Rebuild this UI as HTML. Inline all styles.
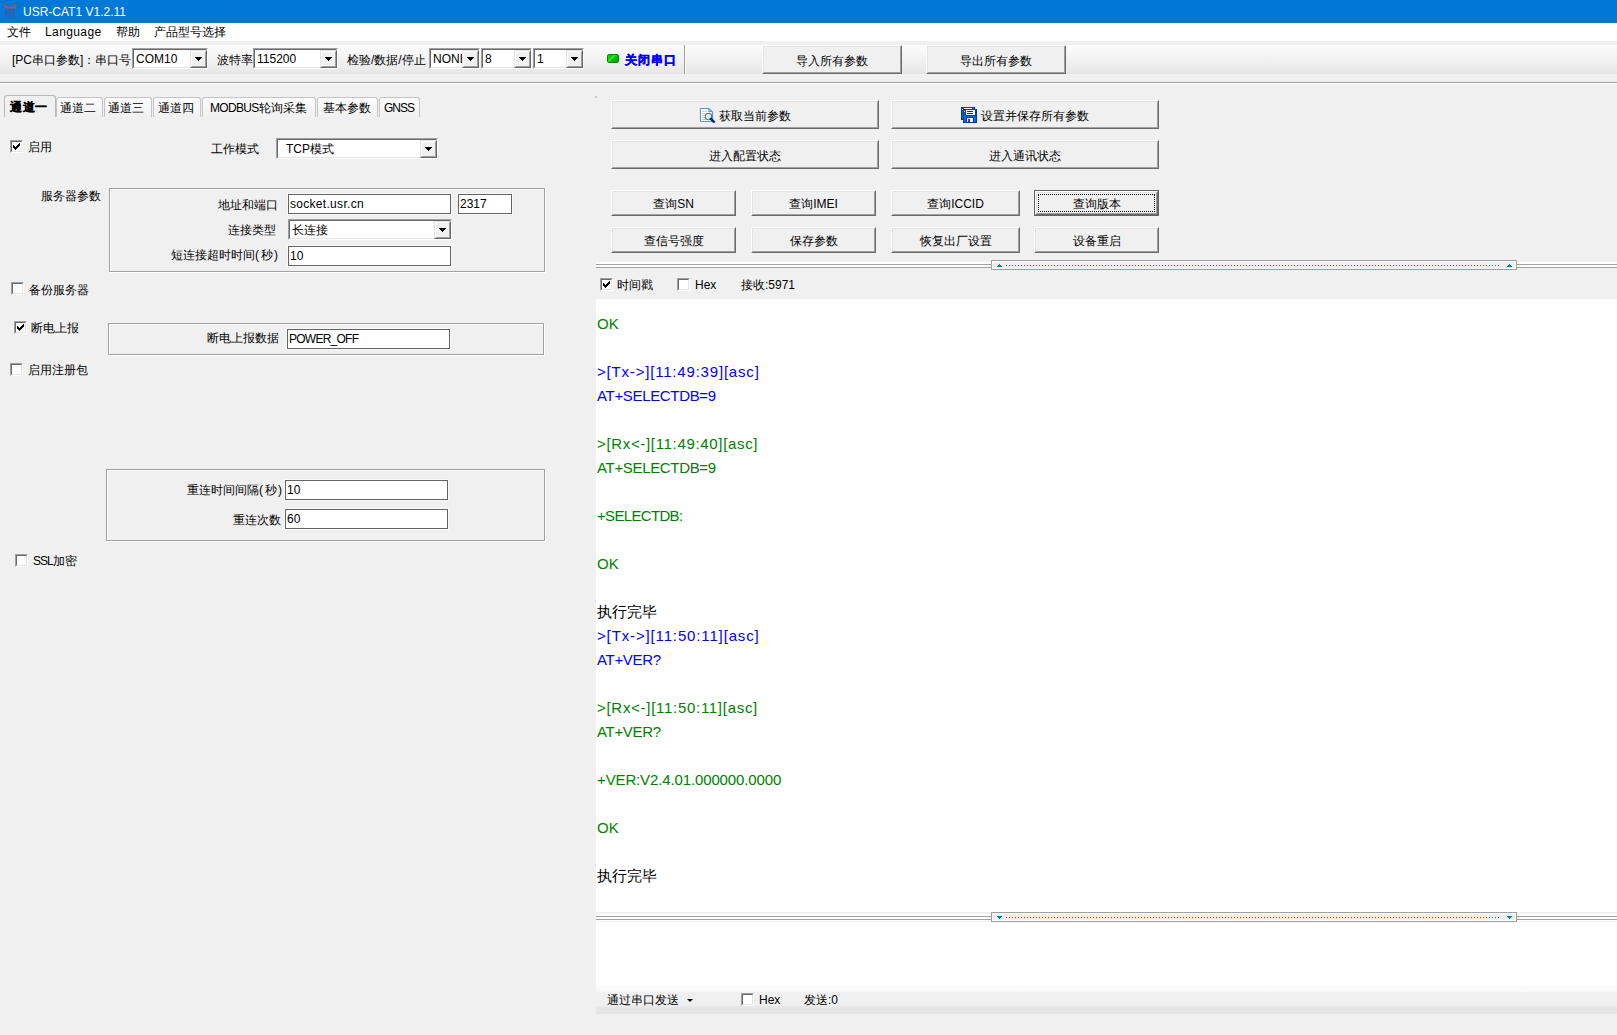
<!DOCTYPE html>
<html><head><meta charset="utf-8">
<style>
html,body{margin:0;padding:0;}
body{width:1617px;height:1035px;overflow:hidden;position:relative;background:#f0f0f0;font-family:"Liberation Sans",sans-serif;font-size:12px;color:#000;}
div{box-sizing:border-box;}
.a{position:absolute;}
.t{position:absolute;white-space:nowrap;line-height:14px;font-size:12px;}
/* raised 3D button */
.btn{position:absolute;background:#f0f0f0;border-top:1px solid #fff;border-left:1px solid #fff;border-right:1px solid #696969;border-bottom:1px solid #696969;}
.btn::before{content:"";position:absolute;left:0;top:0;right:0;bottom:0;border-top:1px solid #e3e3e3;border-left:1px solid #e3e3e3;border-right:1px solid #a0a0a0;border-bottom:1px solid #a0a0a0;}
.btn span{position:absolute;left:0;right:0;top:50%;margin-top:-6px;text-align:center;line-height:14px;white-space:nowrap;}
/* simple edit */
.ed{position:absolute;background:#fff;border:1px solid #646464;box-shadow:0 0 0 1px #f9f9f9;}
.ed span{position:absolute;left:1px;top:2px;line-height:14px;white-space:nowrap;}
/* sunken combo */
.cb{position:absolute;background:#fff;border-top:1px solid #a0a0a0;border-left:1px solid #a0a0a0;border-right:1px solid #fff;border-bottom:1px solid #fff;}
.cb::before{content:"";position:absolute;left:0;top:0;right:0;bottom:0;border-top:1px solid #696969;border-left:1px solid #696969;border-right:1px solid #e3e3e3;border-bottom:1px solid #e3e3e3;}
.cb .dd{position:absolute;top:1px;right:0;bottom:0;width:17px;background:#f0f0f0;border-top:1px solid #e3e3e3;border-left:1px solid #e3e3e3;border-right:1px solid #696969;border-bottom:1px solid #696969;}
.cb .dd::before{content:"";position:absolute;left:0;top:0;right:0;bottom:0;border-top:1px solid #fff;border-left:1px solid #fff;border-right:1px solid #a0a0a0;border-bottom:1px solid #a0a0a0;}
.cb .dd::after{content:"";position:absolute;left:4px;top:6px;width:7px;height:4px;background:linear-gradient(#000,#000) 0 0/7px 1px no-repeat,linear-gradient(#000,#000) 1px 1px/5px 1px no-repeat,linear-gradient(#000,#000) 2px 2px/3px 1px no-repeat,linear-gradient(#000,#000) 3px 3px/1px 1px no-repeat;}
.cb span{position:absolute;left:3px;top:3px;line-height:14px;white-space:nowrap;}
/* checkbox */
.ck{position:absolute;width:13px;height:13px;background:#fff;border-top:1px solid #a0a0a0;border-left:1px solid #a0a0a0;border-right:1px solid #fff;border-bottom:1px solid #fff;}
.ck::before{content:"";position:absolute;left:0;top:0;right:0;bottom:0;border-top:1px solid #696969;border-left:1px solid #696969;border-right:1px solid #e3e3e3;border-bottom:1px solid #e3e3e3;}
.ck svg{position:absolute;left:0;top:0;}
/* group box */
.gb{position:absolute;border:1px solid #a0a0a0;box-shadow:inset 1px 1px 0 #fff, 1px 1px 0 #fff;}
.log{position:absolute;font-size:15px;line-height:24px;white-space:pre;}
.g{color:#008000}.b{color:#0000ff}
</style></head><body>

<!-- title bar -->
<div class="a" style="left:0;top:0;width:1617px;height:23px;background:#0078d7;"></div>
<svg class="a" style="left:0;top:0" width="20" height="20">
<path d="M4 4 L4.6 8.6 L15.4 8.6 L16 4 L14.6 4 L14.2 6.8 L5.8 6.8 L5.4 4 Z" fill="#d4453b"/>
<rect x="5" y="8.8" width="9.5" height="8.4" fill="#3a5aa6" opacity="0.8"/>
<rect x="7.3" y="10" width="1.2" height="7.4" fill="#0078d7"/>
<rect x="10.8" y="10" width="1.2" height="7.4" fill="#0078d7"/>
</svg>
<div class="t" style="left:23px;top:5px;color:#fff;">USR-CAT1 V1.2.11</div>

<!-- menu bar -->
<div class="a" style="left:0;top:23px;width:1617px;height:18px;background:#fff;"></div>
<div class="t" style="left:7px;top:25px;">文件</div>
<div class="t" style="left:45px;top:25px;letter-spacing:0.4px;">Language</div>
<div class="t" style="left:116px;top:25px;">帮助</div>
<div class="t" style="left:154px;top:25px;">产品型号选择</div>

<!-- toolbar -->
<div class="a" style="left:0;top:45px;width:1617px;height:29px;background:linear-gradient(#fcfcfc,#f3f3f3 45%,#e9e9e9 90%,#e3e3e3);"></div>
<div class="a" style="left:0;top:82px;width:1617px;height:1px;background:#a0a0a0;"></div>
<div class="a" style="left:0;top:83px;width:1617px;height:1px;background:#fff;"></div>

<!-- log area -->
<div class="a" style="left:596px;top:299px;width:1021px;height:613px;background:#fff;"></div>
<!-- send area -->
<div class="a" style="left:596px;top:922px;width:1021px;height:63px;background:#fff;"></div>
<!-- bottom bar -->
<div class="a" style="left:596px;top:985px;width:1021px;height:29px;background:linear-gradient(#fcfcfc 0,#f8f8f8 7px,#f0f0f0 7px,#efefef 21px,#e8e8e8 21px,#e4e4e4 29px);"></div>


<!-- toolbar contents -->
<div class="t" style="left:12px;top:53px;">[PC串口参数]：串口号</div>
<div class="cb" style="left:132px;top:48px;width:76px;height:21px;"><span>COM10</span><div class="dd"></div></div>
<div class="t" style="left:217px;top:53px;">波特率</div>
<div class="cb" style="left:253px;top:48px;width:85px;height:21px;"><span>115200</span><div class="dd"></div></div>
<div class="t" style="left:347px;top:53px;">检验/数据/停止</div>
<div class="cb" style="left:429px;top:48px;width:51px;height:21px;"><span>NONE</span><div class="dd"></div></div>
<div class="cb" style="left:481px;top:48px;width:51px;height:21px;"><span>8</span><div class="dd"></div></div>
<div class="cb" style="left:533px;top:48px;width:51px;height:21px;"><span>1</span><div class="dd"></div></div>
<div class="a" style="left:607px;top:54px;width:12px;height:9px;border-radius:2px;background:linear-gradient(135deg,#00d800 0,#00d800 30%,#40f040 40%,#00c800 50%,#00b000 70%,#00a000 100%);border:1px solid #008a00;"></div>
<div class="t" style="left:625px;top:53px;color:#0000ff;font-weight:bold;letter-spacing:1px;-webkit-text-stroke:0.4px #0000ff;">关闭串口</div>
<div class="a" style="left:684px;top:45px;width:1px;height:29px;background:#a0a0a0;"></div>
<div class="a" style="left:685px;top:45px;width:1px;height:29px;background:#fff;"></div>
<div class="btn" style="left:762px;top:45px;width:140px;height:29px;"><span>导入所有参数</span></div>
<div class="btn" style="left:926px;top:45px;width:140px;height:29px;"><span>导出所有参数</span></div>

<!-- tabs -->
<div class="a" style="left:56px;top:97px;width:47px;height:20px;border:1px solid #c4c4c4;border-bottom:none;border-radius:3px 3px 0 0;background:linear-gradient(#fdfdfd,#f0f0f0);"></div>
<div class="a" style="left:104px;top:97px;width:48px;height:20px;border:1px solid #c4c4c4;border-bottom:none;border-radius:3px 3px 0 0;background:linear-gradient(#fdfdfd,#f0f0f0);"></div>
<div class="a" style="left:153px;top:97px;width:48px;height:20px;border:1px solid #c4c4c4;border-bottom:none;border-radius:3px 3px 0 0;background:linear-gradient(#fdfdfd,#f0f0f0);"></div>
<div class="a" style="left:202px;top:97px;width:114px;height:20px;border:1px solid #c4c4c4;border-bottom:none;border-radius:3px 3px 0 0;background:linear-gradient(#fdfdfd,#f0f0f0);"></div>
<div class="a" style="left:317px;top:97px;width:61px;height:20px;border:1px solid #c4c4c4;border-bottom:none;border-radius:3px 3px 0 0;background:linear-gradient(#fdfdfd,#f0f0f0);"></div>
<div class="a" style="left:379px;top:97px;width:41px;height:20px;border:1px solid #c4c4c4;border-bottom:none;border-radius:3px 3px 0 0;background:linear-gradient(#fdfdfd,#f0f0f0);"></div>
<div class="a" style="left:4px;top:95px;width:52px;height:22px;border:1px solid #b8b8b8;border-bottom:none;border-radius:3px 3px 0 0;background:#f0f0f0;"></div>
<div class="t" style="left:10px;top:100px;font-weight:bold;-webkit-text-stroke:0.3px #000;letter-spacing:0.5px;">通道一</div>
<div class="t" style="left:60px;top:101px;">通道二</div>
<div class="t" style="left:108px;top:101px;">通道三</div>
<div class="t" style="left:158px;top:101px;">通道四</div>
<div class="t" style="left:210px;top:101px;"><span style="letter-spacing:-0.67px">MODBUS</span>轮询采集</div>
<div class="t" style="left:323px;top:101px;">基本参数</div>
<div class="t" style="left:384px;top:101px;letter-spacing:-1px;">GNSS</div>

<!-- left panel -->
<div class="ck" style="left:10px;top:140px;"><svg width="11" height="11" shape-rendering="crispEdges" fill="#000"><rect x="8" y="2" width="1" height="1"/><rect x="7" y="3" width="1" height="1"/><rect x="8" y="3" width="1" height="1"/><rect x="2" y="4" width="1" height="1"/><rect x="6" y="4" width="1" height="1"/><rect x="7" y="4" width="1" height="1"/><rect x="8" y="4" width="1" height="1"/><rect x="2" y="5" width="1" height="1"/><rect x="3" y="5" width="1" height="1"/><rect x="5" y="5" width="1" height="1"/><rect x="6" y="5" width="1" height="1"/><rect x="7" y="5" width="1" height="1"/><rect x="2" y="6" width="1" height="1"/><rect x="3" y="6" width="1" height="1"/><rect x="4" y="6" width="1" height="1"/><rect x="5" y="6" width="1" height="1"/><rect x="6" y="6" width="1" height="1"/><rect x="3" y="7" width="1" height="1"/><rect x="4" y="7" width="1" height="1"/><rect x="5" y="7" width="1" height="1"/><rect x="4" y="8" width="1" height="1"/></svg></div>
<div class="t" style="left:28px;top:140px;">启用</div>
<div class="t" style="left:211px;top:142px;">工作模式</div>
<div class="cb" style="left:276px;top:138px;width:162px;height:21px;"><span style="left:9px">TCP模式</span><div class="dd"></div></div>

<div class="t" style="left:41px;top:189px;">服务器参数</div>
<div class="gb" style="left:109px;top:188px;width:436px;height:84px;"></div>
<div class="t" style="left:218px;top:198px;">地址和端口</div>
<div class="ed" style="left:288px;top:194px;width:163px;height:20px;"><span style="letter-spacing:0.3px">socket.usr.cn</span></div>
<div class="ed" style="left:458px;top:194px;width:54px;height:20px;"><span>2317</span></div>
<div class="t" style="left:228px;top:223px;">连接类型</div>
<div class="cb" style="left:288px;top:219px;width:164px;height:21px;"><span>长连接</span><div class="dd"></div></div>
<div class="t" style="left:171px;top:248px;">短连接超时时间<span style="letter-spacing:2px">(</span><span style="letter-spacing:1px">秒</span>)</div>
<div class="ed" style="left:288px;top:246px;width:163px;height:20px;"><span>10</span></div>

<div class="ck" style="left:11px;top:282px;"></div>
<div class="t" style="left:29px;top:283px;">备份服务器</div>

<div class="ck" style="left:14px;top:321px;"><svg width="11" height="11" shape-rendering="crispEdges" fill="#000"><rect x="8" y="2" width="1" height="1"/><rect x="7" y="3" width="1" height="1"/><rect x="8" y="3" width="1" height="1"/><rect x="2" y="4" width="1" height="1"/><rect x="6" y="4" width="1" height="1"/><rect x="7" y="4" width="1" height="1"/><rect x="8" y="4" width="1" height="1"/><rect x="2" y="5" width="1" height="1"/><rect x="3" y="5" width="1" height="1"/><rect x="5" y="5" width="1" height="1"/><rect x="6" y="5" width="1" height="1"/><rect x="7" y="5" width="1" height="1"/><rect x="2" y="6" width="1" height="1"/><rect x="3" y="6" width="1" height="1"/><rect x="4" y="6" width="1" height="1"/><rect x="5" y="6" width="1" height="1"/><rect x="6" y="6" width="1" height="1"/><rect x="3" y="7" width="1" height="1"/><rect x="4" y="7" width="1" height="1"/><rect x="5" y="7" width="1" height="1"/><rect x="4" y="8" width="1" height="1"/></svg></div>
<div class="t" style="left:31px;top:321px;">断电上报</div>
<div class="gb" style="left:108px;top:323px;width:436px;height:32px;"></div>
<div class="t" style="left:207px;top:331px;">断电上报数据</div>
<div class="ed" style="left:287px;top:329px;width:163px;height:20px;"><span style="letter-spacing:-0.75px">POWER_OFF</span></div>

<div class="ck" style="left:10px;top:363px;"></div>
<div class="t" style="left:28px;top:363px;">启用注册包</div>

<div class="gb" style="left:106px;top:469px;width:439px;height:72px;"></div>
<div class="t" style="left:187px;top:483px;">重连时间间隔<span style="letter-spacing:2px">(</span><span style="letter-spacing:1px">秒</span>)</div>
<div class="ed" style="left:285px;top:480px;width:163px;height:20px;"><span>10</span></div>
<div class="t" style="left:233px;top:513px;">重连次数</div>
<div class="ed" style="left:285px;top:509px;width:163px;height:20px;"><span>60</span></div>

<div class="ck" style="left:15px;top:554px;"></div>
<div class="t" style="left:33px;top:554px;"><span style="letter-spacing:-1px">SSL</span>加密</div>


<!-- right panel buttons -->
<div class="a" style="left:595px;top:96px;width:2px;height:2px;background:#c8c8c8;"></div>
<div class="btn" style="left:611px;top:100px;width:268px;height:29px;"><span style="padding-left:20px">获取当前参数</span></div>
<svg class="a" style="left:699px;top:107px" width="17" height="17" viewBox="0 0 17 17">
<path d="M1.5 1.5 H10 L13.5 5 V14.5 H1.5 Z" fill="#fff" stroke="#5b9bd5" stroke-width="1.2"/>
<path d="M10 1.5 V4.5 H13" fill="none" stroke="#5b9bd5" stroke-width="1.2"/>
<path d="M3 4.5 H8 M3 6.5 H7 M3 8.5 H6 M3 10.5 H6 M3 12.5 H7" stroke="#d0d0d0" stroke-width="1"/>
<circle cx="9.5" cy="9.5" r="3.2" fill="#c9f7f7" stroke="#6e6e6e" stroke-width="1.1"/>
<path d="M11.8 11.8 L15 14.8" stroke="#0020a0" stroke-width="2.4" stroke-linecap="round"/>
</svg>
<div class="btn" style="left:891px;top:100px;width:268px;height:29px;"><span style="padding-left:20px">设置并保存所有参数</span></div>
<svg class="a" style="left:960px;top:106px" width="18" height="18" shape-rendering="crispEdges">
<rect x="1" y="1" width="14" height="13" fill="#003a9e"/>
<rect x="2" y="2" width="12" height="11" fill="#0a64d2"/>
<rect x="4" y="2" width="8" height="1" fill="#fff"/>
<rect x="2" y="3" width="1" height="1" fill="#fff"/>
<rect x="3" y="3" width="14" height="14" fill="#003a9e"/>
<rect x="4" y="4" width="12" height="12" fill="#0a6ad6"/>
<rect x="5" y="4" width="11" height="6" fill="#003a9e"/>
<rect x="6" y="4" width="9" height="5" fill="#fff"/>
<rect x="7" y="5" width="6" height="1" fill="#0033a0"/>
<rect x="7" y="7" width="6" height="1" fill="#0033a0"/>
<rect x="4" y="5" width="1" height="1" fill="#fff"/>
<rect x="6" y="11" width="8" height="5" fill="#003a9e"/>
<rect x="7" y="12" width="6" height="4" fill="#f4f4f4"/>
<rect x="8" y="13" width="2" height="3" fill="#0a50c0"/>
</svg>
<div class="btn" style="left:611px;top:140px;width:268px;height:29px;"><span>进入配置状态</span></div>
<div class="btn" style="left:891px;top:140px;width:268px;height:29px;"><span>进入通讯状态</span></div>

<div class="btn" style="left:611px;top:190px;width:125px;height:26px;"><span>查询SN</span></div>
<div class="btn" style="left:751px;top:190px;width:125px;height:26px;"><span>查询IMEI</span></div>
<div class="btn" style="left:891px;top:190px;width:129px;height:26px;"><span>查询ICCID</span></div>
<div class="a" style="left:1034px;top:190px;width:125px;height:26px;border:1px solid #646464;"></div>
<div class="btn" style="left:1035px;top:191px;width:123px;height:24px;"><span>查询版本</span></div>
<div class="a" style="left:1038px;top:194px;width:117px;height:18px;border:1px dotted #000;"></div>

<div class="btn" style="left:611px;top:227px;width:125px;height:26px;"><span>查信号强度</span></div>
<div class="btn" style="left:751px;top:227px;width:125px;height:26px;"><span>保存参数</span></div>
<div class="btn" style="left:891px;top:227px;width:129px;height:26px;"><span>恢复出厂设置</span></div>
<div class="btn" style="left:1034px;top:227px;width:125px;height:26px;"><span>设备重启</span></div>

<!-- top splitter -->
<div class="a" style="left:596px;top:262px;width:1021px;height:6px;background:linear-gradient(#fff 0,#fff 2px,#a0a0a0 2px,#a0a0a0 3px,#fff 3px,#fff 5px,#a0a0a0 5px,#a0a0a0 6px);"></div>
<div class="a" style="left:991px;top:260px;width:526px;height:10px;background:#f0f0f0;border:1px solid #a0a0a0;box-shadow:inset 0 0 0 1px #fff;"></div>
<div class="a" style="left:1006px;top:265px;width:493px;height:1px;background:repeating-linear-gradient(90deg,#0078d7 0,#0078d7 1px,transparent 1px,transparent 3px);"></div>
<svg class="a" style="left:997px;top:264px" width="5" height="3" shape-rendering="crispEdges"><rect x="2" y="0" width="1" height="1" fill="#0078d7"/><rect x="1" y="1" width="3" height="1" fill="#0078d7"/><rect x="0" y="2" width="5" height="1" fill="#0078d7"/></svg>
<svg class="a" style="left:1507px;top:264px" width="5" height="3" shape-rendering="crispEdges"><rect x="2" y="0" width="1" height="1" fill="#0078d7"/><rect x="1" y="1" width="3" height="1" fill="#0078d7"/><rect x="0" y="2" width="5" height="1" fill="#0078d7"/></svg>

<!-- receive options -->
<div class="ck" style="left:600px;top:278px;"><svg width="11" height="11" shape-rendering="crispEdges" fill="#000"><rect x="8" y="2" width="1" height="1"/><rect x="7" y="3" width="1" height="1"/><rect x="8" y="3" width="1" height="1"/><rect x="2" y="4" width="1" height="1"/><rect x="6" y="4" width="1" height="1"/><rect x="7" y="4" width="1" height="1"/><rect x="8" y="4" width="1" height="1"/><rect x="2" y="5" width="1" height="1"/><rect x="3" y="5" width="1" height="1"/><rect x="5" y="5" width="1" height="1"/><rect x="6" y="5" width="1" height="1"/><rect x="7" y="5" width="1" height="1"/><rect x="2" y="6" width="1" height="1"/><rect x="3" y="6" width="1" height="1"/><rect x="4" y="6" width="1" height="1"/><rect x="5" y="6" width="1" height="1"/><rect x="6" y="6" width="1" height="1"/><rect x="3" y="7" width="1" height="1"/><rect x="4" y="7" width="1" height="1"/><rect x="5" y="7" width="1" height="1"/><rect x="4" y="8" width="1" height="1"/></svg></div>
<div class="t" style="left:617px;top:278px;">时间戳</div>
<div class="ck" style="left:677px;top:278px;"></div>
<div class="t" style="left:695px;top:278px;">Hex</div>
<div class="t" style="left:741px;top:278px;">接收:5971</div>

<!-- log -->
<div class="log" style="left:597px;top:312px;"><span class="g">OK</span>

<span class="b" style="letter-spacing:0.81px">&gt;[Tx-&gt;][11:49:39][asc]</span>
<span class="b" style="letter-spacing:-0.33px">AT+SELECTDB=9</span>

<span class="g" style="letter-spacing:0.67px">&gt;[Rx&lt;-][11:49:40][asc]</span>
<span class="g" style="letter-spacing:-0.33px">AT+SELECTDB=9</span>

<span class="g" style="letter-spacing:-0.67px">+SELECTDB:</span>

<span class="g">OK</span>

执行完毕
<span class="b" style="letter-spacing:0.86px">&gt;[Tx-&gt;][11:50:11][asc]</span>
<span class="b" style="letter-spacing:-0.33px">AT+VER?</span>

<span class="g" style="letter-spacing:0.71px">&gt;[Rx&lt;-][11:50:11][asc]</span>
<span class="g" style="letter-spacing:-0.33px">AT+VER?</span>

<span class="g" style="letter-spacing:-0.13px">+VER:V2.4.01.000000.0000</span>

<span class="g">OK</span>

执行完毕</div>

<!-- bottom splitter -->
<div class="a" style="left:596px;top:912px;width:1021px;height:10px;background:linear-gradient(#f0f0f0 0,#f0f0f0 2px,#fff 2px,#fff 4px,#a0a0a0 4px,#a0a0a0 5px,#fff 5px,#fff 7px,#a0a0a0 7px,#a0a0a0 8px,#fff 8px,#fff 9px,#f0f0f0 9px);"></div>
<div class="a" style="left:991px;top:912px;width:526px;height:10px;background:#f0f0f0;border:1px solid #a0a0a0;box-shadow:inset 0 0 0 1px #fff;"></div>
<div class="a" style="left:1006px;top:917px;width:493px;height:1px;background:repeating-linear-gradient(90deg,#0078d7 0,#0078d7 1px,transparent 1px,transparent 3px);"></div>
<svg class="a" style="left:997px;top:916px" width="5" height="3" shape-rendering="crispEdges"><rect x="0" y="0" width="5" height="1" fill="#0078d7"/><rect x="1" y="1" width="3" height="1" fill="#0078d7"/><rect x="2" y="2" width="1" height="1" fill="#0078d7"/></svg>
<svg class="a" style="left:1507px;top:916px" width="5" height="3" shape-rendering="crispEdges"><rect x="0" y="0" width="5" height="1" fill="#0078d7"/><rect x="1" y="1" width="3" height="1" fill="#0078d7"/><rect x="2" y="2" width="1" height="1" fill="#0078d7"/></svg>

<!-- bottom bar contents -->
<div class="t" style="left:607px;top:993px;">通过串口发送</div>
<div class="a" style="left:687px;top:999px;width:0;height:0;border-left:3px solid transparent;border-right:3px solid transparent;border-top:3px solid #000;"></div>
<div class="ck" style="left:741px;top:993px;"></div>
<div class="t" style="left:759px;top:993px;">Hex</div>
<div class="t" style="left:804px;top:993px;">发送:0</div>

</body></html>
